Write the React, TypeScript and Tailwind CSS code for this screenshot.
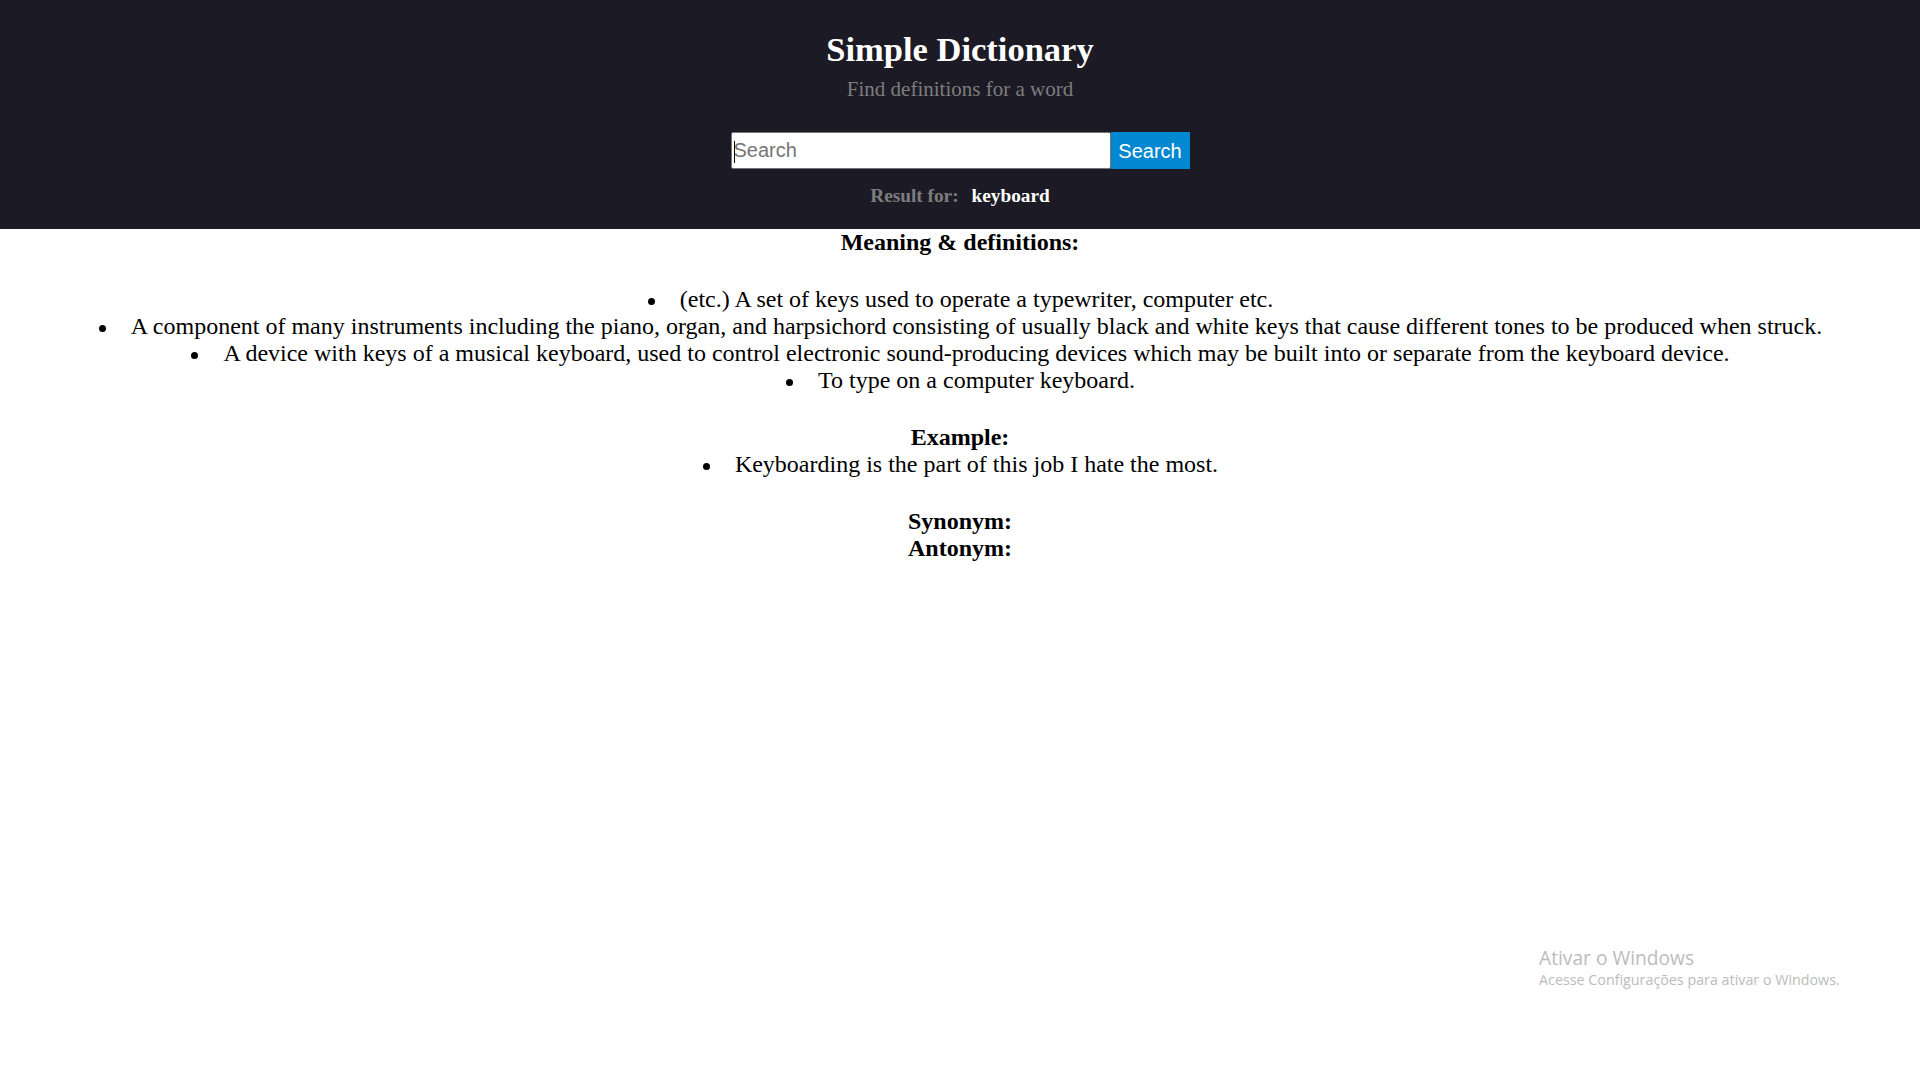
import { useState } from "react";

const definitions = [
  "(etc.) A set of keys used to operate a typewriter, computer etc.",
  "A component of many instruments including the piano, organ, and harpsichord consisting of usually black and white keys that cause different tones to be produced when struck.",
  "A device with keys of a musical keyboard, used to control electronic sound-producing devices which may be built into or separate from the keyboard device.",
  "To type on a computer keyboard.",
];

const examples = ["Keyboarding is the part of this job I hate the most."];

function Bullet({ text }: { text: string }) {
  return (
    <li className="list-none">
      <span className="inline-flex w-[33px] items-center pl-[1px] align-middle">
        <span className="h-[7px] w-[7px] rounded-full bg-black" />
      </span>
      {text}
    </li>
  );
}

function App() {
  const [query, setQuery] = useState("");

  return (
    <div className="relative min-h-screen bg-white font-['Liberation_Serif','Times_New_Roman',serif] text-black">
      <header className="flex flex-col items-center bg-[#1c1b25] pt-[30px] pb-[23px]">
        <h1 className="text-[34.5px] leading-[38px] font-bold text-white">
          Simple Dictionary
        </h1>
        <p className="mt-[10px] text-[21px] leading-[23px] text-[#7d7d7d]">
          Find definitions for a word
        </p>

        <form
          className="mt-[31px] flex"
          onSubmit={(e) => e.preventDefault()}
        >
          <div className="relative">
            <input
              value={query}
              onChange={(e) => setQuery(e.target.value)}
              placeholder="Search"
              className="h-[37px] w-[380px] rounded-[2px] border border-[#767676] bg-white px-[2px] font-['Liberation_Sans',Arial,sans-serif] text-[20px] text-black outline-none placeholder:text-[#757575]"
            />
            {query === "" && (
              <span className="absolute top-[9px] left-[3px] h-[22px] w-px bg-black" />
            )}
          </div>
          <button
            type="submit"
            className="h-[37px] w-[79px] bg-[#0288d1] font-['Liberation_Sans',Arial,sans-serif] text-[20px] text-white"
          >
            Search
          </button>
        </form>

        <p className="mt-[16px] text-[19.3px] leading-[21px] font-bold">
          <span className="text-[#7d7d7d]">Result for:</span>
          <span className="ml-[13px] text-white">keyboard</span>
        </p>
      </header>

      <main className="text-center text-[24px] leading-[27px]">
        <h3 className="font-bold">Meaning &amp; definitions:</h3>
        <ul className="mt-[30px]">
          {definitions.map((d) => (
            <Bullet key={d} text={d} />
          ))}
        </ul>

        <h3 className="mt-[30px] font-bold">Example:</h3>
        <ul>
          {examples.map((d) => (
            <Bullet key={d} text={d} />
          ))}
        </ul>

        <h3 className="mt-[30px] font-bold">Synonym:</h3>
        <h3 className="font-bold">Antonym:</h3>
      </main>

      {/* windows activation watermark */}
      <div className="pointer-events-none absolute top-[945px] left-[1539px] font-['Open_Sans','Noto_Sans',sans-serif] text-[#bcbcbc]">
        <p className="text-[19.2px] leading-[25px]">Ativar o Windows</p>
        <p className="text-[14.3px] leading-[20px]">
          Acesse Configurações para ativar o Windows.
        </p>
      </div>
    </div>
  );
}

export default App;
